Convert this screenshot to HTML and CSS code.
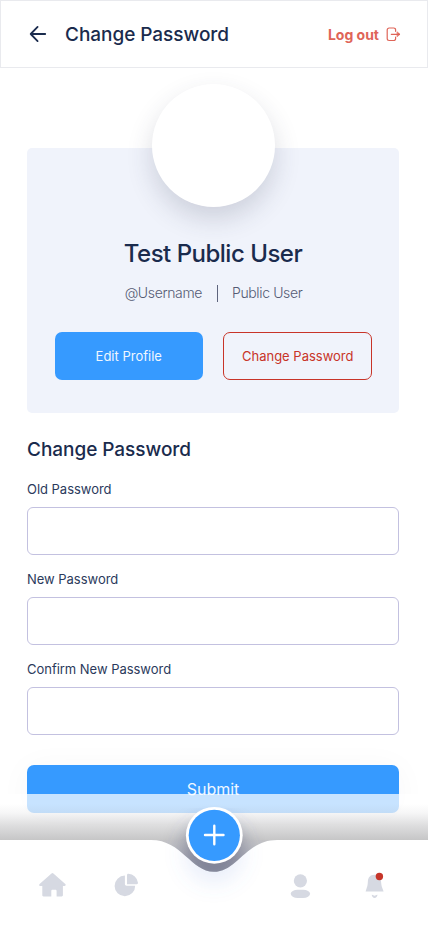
FILE: index.html
```html
<!DOCTYPE html>
<html lang="en">
<head>
<meta charset="utf-8">
<meta name="viewport" content="width=device-width, initial-scale=1">
<title>Change Password</title>
<link rel="stylesheet" href="styles.css">
</head>
<body>
<div class="screen">
  <header class="topbar">
    <svg class="back" width="18" height="18" viewBox="0 0 18 18"><path d="M16.200 9H1.700M8.600 1.900L1.700 9l6.900 7.100"/></svg>
    <h1 class="topbar-title">Change Password</h1>
    <a class="logout"><span>Log out</span>
      <svg width="15" height="15" viewBox="0 0 15 15"><path d="M9.600 4.300V2.800A1.800 1.800 0 0 0 7.800 1H3.100A1.900 1.900 0 0 0 1.200 2.900v8.700a1.900 1.900 0 0 0 1.900 1.900h4.700a1.800 1.800 0 0 0 1.800-1.800v-1.500M5.300 7.300h8.200"/><path class="head" d="M11.300 5l2.700 2.300-2.700 2.300Z"/></svg>
    </a>
  </header>
  <main class="content">
    <section class="profile">
      <div class="avatar"></div>
      <h2 class="name">Test Public User</h2>
      <div class="meta"><span class="handle">@Username</span><i class="divider"></i><span class="role">Public User</span></div>
      <div class="actions">
        <button class="btn btn-primary">Edit Profile</button>
        <button class="btn btn-outline">Change Password</button>
      </div>
    </section>
    <form class="form">
      <h2 class="form-title">Change Password</h2>
      <label class="field"><span>Old Password</span><input type="password"></label>
      <label class="field"><span>New Password</span><input type="password"></label>
      <label class="field"><span>Confirm New Password</span><input type="password"></label>
      <button class="submit" type="button">Submit</button>
    </form>
  </main>
  <nav class="tabbar">
    <svg class="tabbar-shape" width="428" height="132" viewBox="0 0 428 132">
      <defs>
        <linearGradient id="fade" x1="0" y1="0" x2="0" y2="1">
          <stop offset="0" stop-color="#6a6a70" stop-opacity="0"/>
          <stop offset=".25" stop-color="#6a6a70" stop-opacity=".06"/>
          <stop offset=".6" stop-color="#66666a" stop-opacity=".22"/>
          <stop offset="1" stop-color="#606062" stop-opacity=".36"/>
        </linearGradient>
        <linearGradient id="dip" x1="0" y1="0" x2="0" y2="1">
          <stop offset="0" stop-color="#c4c4c7"/>
          <stop offset="1" stop-color="#acb0bb"/>
        </linearGradient>
        <filter id="soft" x="-80%" y="-80%" width="260%" height="260%"><feGaussianBlur stdDeviation="10"/></filter>
        <clipPath id="pit"><path d="M0 14H428V46H277C246 46 237 77.800 214 77.800S182 46 151 46H0Z"/></clipPath>
      </defs>
      <path fill="#fff" fill-opacity=".72" d="M0 0H428V46H0Z"/>
      <path class="surface" d="M0 46H428V132H0Z"/>
      <circle cx="214" cy="60" r="30" fill="#6684d8" fill-opacity=".13" filter="url(#soft)"/>
      <path fill="url(#fade)" d="M0 10H428V46H0Z"/>
      <path fill="url(#dip)" d="M151 46C182 46 191 77.800 214 77.800S246 46 277 46Z"/>
      <g clip-path="url(#pit)"><circle cx="214" cy="59" r="31" fill="#4d5370" fill-opacity=".5" filter="url(#soft)"/></g>
      <circle cx="214.300" cy="41.300" r="28.400" fill="#fff"/>
      <circle cx="214.300" cy="41.300" r="25.600" fill="#369aff"/>
      <path class="plus" d="M205 41H223.500M214.300 31.800V50.200"/>
    </svg>
    <div class="tabs">
      <svg width="28" height="26" viewBox="0 0 28 26"><path transform="translate(.4)" d="M13.100 1.400a1.400 1.400 0 0 1 1.900 0L26.900 12c.8.700.4 1.900-.7 1.900h-1.700v9.300c0 .7-.5 1.200-1.200 1.200h-5.100v-5.500c0-.7-.5-1.200-1.200-1.200h-2.900c-.7 0-1.200.5-1.200 1.200v5.500H5.100c-.7 0-1.200-.5-1.200-1.200v-9.300H1.800C.8 13.900.5 12.700 1.200 12Z"/></svg>
      <svg width="28" height="26" viewBox="0 0 28 26"><path transform="translate(.4)" d="M12.500 3.600V12.100c0 1 .7 1.700 1.700 1.700h8.600A10.300 10.300 0 1 1 12.500 3.600ZM14.600 3.100c0-.8.700-1.400 1.400-1.300A10.400 10.400 0 0 1 25.600 10.800c.1.800-.5 1.400-1.300 1.400h-9.700Z"/></svg>
      <svg class="person" width="28" height="26" viewBox="0 0 28 26"><circle cx="14.400" cy="8.800" r="6.600"/><rect x="4.700" y="17.700" width="19.400" height="8.200" rx="7" ry="4.100"/></svg>
      <svg width="28" height="26" viewBox="0 0 28 26"><g transform="translate(.4)"><path d="M14 2.700c-4.300 0-6.300 3-6.500 6.300-.3 4.700-.5 5.200-1.200 7l-1.100 3.400h18l-1.300-3.400c-.8-2-1-3.500-1.300-7-.3-3.700-2.700-6.300-6.600-6.300Z"/><path d="M11.300 22.700c1.500-.2 1.700 1 2.900 1s1.400-1.200 2.900-1c-.2 1.800-1.400 3.200-2.900 3.200S11.500 24.500 11.300 22.700Z"/><circle class="dot" cx="19" cy="4.500" r="3.700"/></g></svg>
    </div>
  </nav>
</div>
</body>
</html>
```

FILE: styles.css
```css
* { box-sizing: border-box; }
body { margin: 0; background: #fff; font-family: Inter, "Liberation Sans", sans-serif; color: #1a2b4d; }
h1, h2 { margin: 0; font-weight: 500; }
button { font: inherit; padding: 0; }
.screen { position: relative; width: 428px; height: 926px; overflow: hidden; }
.topbar { height: 68px; border: 1px solid #e9eaee; display: flex; align-items: center; padding: 0 26px 0 28px; }
.back { fill: none; stroke: #1a2b4d; stroke-width: 1.800; stroke-linecap: round; stroke-linejoin: round; }
.topbar-title { margin: 1px 0 0 18px; font-size: 19px; line-height: 24px; letter-spacing: -.04px; }
.logout { margin-left: auto; display: flex; align-items: center; gap: 7px; color: #df6558; font-size: 14px; font-weight: 700; }
.logout svg { fill: none; stroke: currentColor; stroke-width: 1.2; stroke-linecap: round; stroke-linejoin: round; }
.logout .head { fill: currentColor; stroke-width: .6; }
.content { padding: 80px 29px 0 27px; }
.profile { height: 265px; border-radius: 5px; background: #f0f3fb; display: flex; flex-direction: column; align-items: center; }
.avatar { width: 123px; height: 123px; margin-top: -64px; flex: none; border-radius: 50%; background: #fff; box-shadow: 0 12px 26px rgba(50, 58, 85, .18); }
.name { margin-top: 31px; font-size: 24px; line-height: 32px; letter-spacing: -.5px; }
.meta { display: flex; align-items: center; margin: 15px 0 0 1px; height: 17px; font-size: 14px; line-height: 16px; font-weight: 300; letter-spacing: -.37px; color: #555b74; white-space: nowrap; }
.meta span { margin-bottom: 1px; }
.divider { width: 1px; height: 17px; margin: 0 14px 0 15px; background: #5e647d; }
.actions { display: grid; grid-template-columns: 1fr 1fr; gap: 20px; width: 317px; margin-top: 30px; }
.btn { min-width: 0; height: 48px; border-radius: 7px; font-size: 13px; white-space: nowrap; }
.btn-primary { border: 0; background: #369aff; color: #f0f7ff; }
.btn-outline { border: 1px solid #c83428; background: transparent; color: #c83428; padding-left: 1px; }
.form-title { margin-top: 24px; font-size: 19px; line-height: 26px; letter-spacing: -.04px; }
.field { display: block; height: 90px; }
.form-title + .field { margin-top: 18px; }
.field span { display: block; height: 26px; font-size: 13px; line-height: 17px; letter-spacing: -.03px; color: #2b3a5c; }
.field input { display: block; width: 372px; height: 48px; border: 1px solid #c3c1e0; border-radius: 6px; background: #fff; }
.submit { width: 372px; height: 48px; margin-top: 14.400px; border: 0; border-radius: 7px; background: #369aff; color: #f0f7ff; font-size: 16px; box-shadow: 0 3px 32px rgba(50, 50, 70, .04); display: block; }
.tabbar { position: absolute; left: 0; bottom: 0; width: 428px; height: 132px; }
.tabbar-shape { position: absolute; inset: 0; }
.surface { fill: #fff; }
.plus { stroke: #fff; stroke-width: 2.400; stroke-linecap: round; }
.tabs { position: relative; display: flex; gap: 46px; padding: 78px 40px 0 38px; fill: #d6d9e2; }
.person { margin-left: auto; }
.dot { fill: #c63529; }
```
